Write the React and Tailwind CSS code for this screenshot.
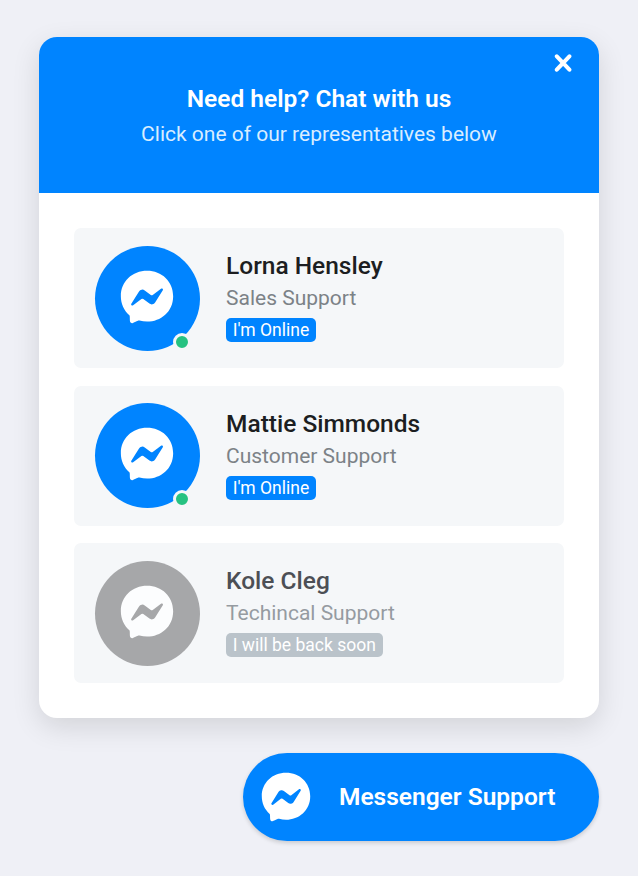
import { FaFacebookMessenger } from "react-icons/fa";

const people = [
  { name: "Lorna Hensley", role: "Sales Support", status: "I'm Online", online: true },
  { name: "Mattie Simmonds", role: "Customer Support", status: "I'm Online", online: true },
  { name: "Kole Cleg", role: "Techincal Support", status: "I will be back soon", online: false },
];

function Person({ name, role, status, online }) {
  return (
    <li className="flex h-[140px] items-center rounded-[7px] bg-[#f5f7f9] pl-[21px]">
      <div
        className={`relative flex size-[105px] shrink-0 items-center justify-center rounded-full ${
          online ? "bg-[#0084ff] text-white" : "bg-[#a6a7a9] text-[#fcfdfe]"
        }`}
      >
        <FaFacebookMessenger className="mr-px mb-[3px] size-[54px]" />
        {online && (
          <span className="absolute right-[9px] bottom-0 size-[18px] rounded-full border-3 border-[#f5f7f9] bg-[#26c281]" />
        )}
      </div>
      <div className="mb-[4px] ml-[26px] flex flex-col items-start">
        <div className={`text-[24.5px] leading-[32px] font-medium ${online ? "text-[#1c1e21]" : "text-[#4c4f55]"}`}>
          {name}
        </div>
        <div className={`text-[21px] leading-[32px] ${online ? "text-[#7c8287]" : "text-[#959ba1]"}`}>{role}</div>
        <div
          className={`mt-[4px] h-[24px] rounded-[5px] px-[6.7px] text-[17.5px] leading-[24px] text-white ${
            online ? "bg-[#0084ff]" : "bg-[#bac3ca]"
          }`}
        >
          {status}
        </div>
      </div>
    </li>
  );
}

export default function App() {
  return (
    <main className="flex h-[876px] w-[638px] flex-col items-end bg-[#eff0f6] pt-[37px] pr-[39px] font-['Roboto',sans-serif]">
      <section className="h-[681px] w-[560px] overflow-hidden rounded-[18px] bg-white shadow-[0_9px_28px_rgba(0,0,0,0.12)]">
        <header className="relative flex h-[156px] flex-col items-center bg-[#0084ff] pt-[44px] text-white">
          <h1 className="text-[24.5px] leading-[35px] font-semibold">Need help? Chat with us</h1>
          <p className="mt-px text-[21px] leading-[35px] text-[#d9edff]">Click one of our representatives below</p>
          <button aria-label="Close" className="absolute top-[17px] right-[27px]">
            <svg viewBox="0 0 18 18" className="size-[18px]" stroke="currentColor" strokeWidth="4" strokeLinecap="round">
              <path d="M2.8 2.3 15.4 15.7M15.4 2.3 2.8 15.7" />
            </svg>
          </button>
        </header>
        <ul className="flex flex-col gap-[17.5px] px-[35px] pt-[35px]">
          {people.map((p) => (
            <Person key={p.name} {...p} />
          ))}
        </ul>
      </section>
      <button className="mt-[35px] flex h-[88px] w-[356px] items-center rounded-full bg-[#0084ff] pl-[18px] text-white shadow-[0_2px_4px_rgba(0,0,0,0.16)]">
        <FaFacebookMessenger className="size-[50px]" />
        <span className="mb-[2px] ml-[28px] text-[24.5px] leading-[35px] font-semibold">Messenger Support</span>
      </button>
    </main>
  );
}
